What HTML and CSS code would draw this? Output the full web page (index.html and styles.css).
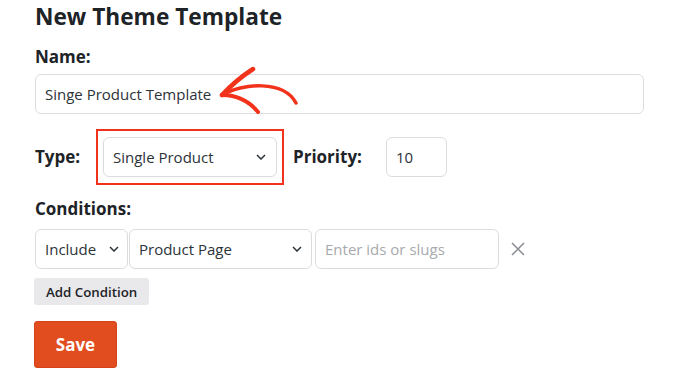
FILE: index.html
```html
<!DOCTYPE html>
<html>
<head>
<meta charset="utf-8">
<link rel="stylesheet" href="styles.css">
</head>
<body>
<div class="page">
  <h1 class="title">New Theme Template</h1>
  <label class="label name-label">Name:</label>
  <div class="field name-field">Singe Product Template</div>

  <div class="type-row">
    <span class="label type-label">Type:</span>
    <div class="highlight">
      <div class="field select type-select">
        <span>Single Product</span>
        <svg class="chev" viewBox="0 0 10 6" width="10" height="6"><path d="M1 1 L5 5 L9 1" fill="none" stroke="#2c3338" stroke-width="1.5"/></svg>
      </div>
    </div>
    <span class="label priority-label">Priority:</span>
    <div class="field priority">10</div>
  </div>

  <div class="label cond-label">Conditions:</div>
  <div class="cond-row">
    <div class="field select include">
      <span>Include</span>
      <svg class="chev" viewBox="0 0 10 6" width="10" height="6"><path d="M1 1 L5 5 L9 1" fill="none" stroke="#2c3338" stroke-width="1.5"/></svg>
    </div>
    <div class="field select page-select">
      <span>Product Page</span>
      <svg class="chev" viewBox="0 0 10 6" width="10" height="6"><path d="M1 1 L5 5 L9 1" fill="none" stroke="#2c3338" stroke-width="1.5"/></svg>
    </div>
    <div class="field slugs">Enter ids or slugs</div>
    <svg class="remove" viewBox="0 0 14 14" width="14" height="14"><path d="M1 1 L13 13 M13 1 L1 13" fill="none" stroke="#8c8f94" stroke-width="1.6"/></svg>
  </div>
  <button class="btn-add">Add Condition</button>
  <button class="btn-save">Save</button>

  <svg class="annot" viewBox="0 0 680 375" width="680" height="375">
    <g fill="none" stroke="#f2321b" stroke-linecap="round" stroke-linejoin="round">
      <path d="M222 95 Q236 80 253 69" stroke-width="4.5"/>
      <path d="M222 95 Q244 95 258 112" stroke-width="4"/>
      <path d="M222 95 C242 83 284 80 296 103" stroke-width="3.5"/>
    </g>
  </svg>
</div>
</body>
</html>
```

FILE: styles.css
```css
html, body {
  margin: 0;
  padding: 0;
  background: #ffffff;
}
body {
  font-family: "Open Sans", "Noto Sans", sans-serif;
  color: #1d2327;
}
.page {
  position: relative;
  width: 680px;
  height: 375px;
  padding: 2px 0 0 35px;
  box-sizing: border-box;
  display: flex;
  flex-direction: column;
  align-items: flex-start;
}
.title {
  margin: 0;
  font-size: 22.7px;
  line-height: 30px;
  font-weight: 700;
  color: #1d2327;
}
.label {
  font-size: 17px;
  line-height: 20px;
  font-weight: 700;
  color: #1d2327;
}
.name-label {
  margin-top: 15px;
}
.field {
  box-sizing: border-box;
  height: 40px;
  border: 1px solid #dcdcde;
  border-radius: 6px;
  background: #fff;
  font-size: 15px;
  color: #2c3338;
  display: flex;
  align-items: center;
  padding: 0 9px;
}
.name-field {
  margin-top: 7px;
  width: 609px;
}
.type-row {
  margin-top: 15px;
  display: flex;
  align-items: center;
}
.type-label {
  width: 61px;
}
.highlight {
  border: 2px solid #f2321b;
  padding: 6px 5px;
}
.select {
  justify-content: space-between;
}
.chev {
  display: block;
  flex: none;
}
.type-select {
  width: 174px;
  padding-right: 10px;
}
.priority-label {
  margin-left: 9px;
  width: 93px;
}
.priority {
  width: 61px;
}
.cond-label {
  margin-top: 14px;
}
.cond-row {
  margin-top: 10px;
  display: flex;
  align-items: center;
}
.include {
  width: 93px;
  padding-right: 8px;
}
.page-select {
  margin-left: 1px;
  width: 183px;
  padding-right: 9px;
}
.slugs {
  margin-left: 3px;
  width: 184px;
  color: #a7aaad;
}
.remove {
  margin-left: 12px;
}
.btn-add {
  margin: 9px 0 0 -1px;
  height: 27px;
  padding: 0 12px;
  border: none;
  border-radius: 3px;
  background: #e9e9ec;
  font-family: "Open Sans", "Noto Sans", sans-serif;
  font-size: 13.3px;
  font-weight: 600;
  color: #1d2327;
}
.btn-save {
  margin: 16px 0 0 -1px;
  width: 83px;
  height: 47px;
  border: 1px solid #d4431a;
  border-radius: 3px;
  background: #e14d1f;
  font-family: "Open Sans", "Noto Sans", sans-serif;
  font-size: 17px;
  font-weight: 700;
  color: #fff;
}
.annot {
  position: absolute;
  left: 0;
  top: 0;
  pointer-events: none;
}
```
